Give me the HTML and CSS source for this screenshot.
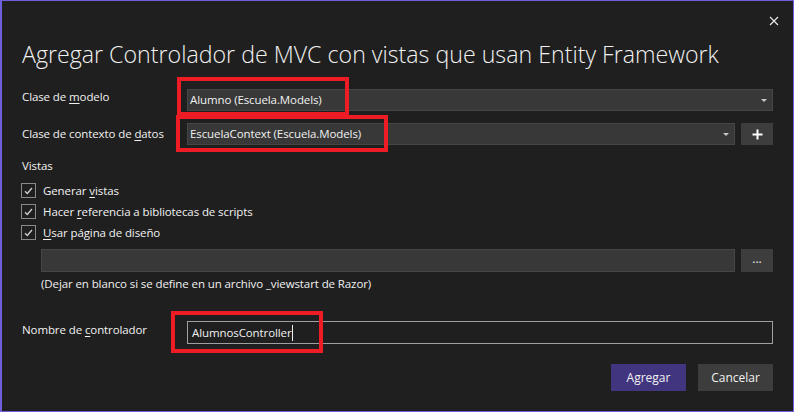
FILE: index.html
```html
<!DOCTYPE html>
<html lang="es">
<head>
<meta charset="utf-8">
<title>Agregar Controlador de MVC</title>
<link rel="stylesheet" href="styles.css">
</head>
<body>
<div class="window">
  <div class="titlebar">
    <span class="close" aria-label="Cerrar">
      <svg width="10" height="10" viewBox="0 0 10 10"><path d="M1 1 L9 9 M9 1 L1 9" stroke="#e6e6e6" stroke-width="1.2" fill="none"/></svg>
    </span>
  </div>
  <h1 class="title">Agregar Controlador de MVC con vistas que usan Entity Framework</h1>

  <div class="row row-model">
    <label class="label">Clase de <u>m</u>odelo</label>
    <div class="control">
      <div class="combo">
        <span class="combo-text">Alumno (Escuela.Models)</span>
        <span class="arrow"></span>
      </div>
      <span class="redbox rb1"></span>
    </div>
  </div>

  <div class="row row-context">
    <label class="label">Clase de contexto de <u>d</u>atos</label>
    <div class="control">
      <div class="combo">
        <span class="combo-text">EscuelaContext (Escuela.Models)</span>
        <span class="arrow"></span>
      </div>
      <button class="sq-btn plus">
        <svg width="11" height="11" viewBox="0 0 11 11"><path d="M5.5 0.5 V10.5 M0.5 5.5 H10.5" stroke="#ffffff" stroke-width="2" fill="none"/></svg>
      </button>
      <span class="redbox rb2"></span>
    </div>
  </div>

  <div class="section">Vistas</div>
  <div class="checks">
    <div class="check"><span class="box"><svg width="9" height="8" viewBox="0 0 9 8"><path d="M1 4.2 L3.3 6.5 L8 1" stroke="#d0d0d0" stroke-width="1.3" fill="none"/></svg></span><span>Generar <u>v</u>istas</span></div>
    <div class="check"><span class="box"><svg width="9" height="8" viewBox="0 0 9 8"><path d="M1 4.2 L3.3 6.5 L8 1" stroke="#d0d0d0" stroke-width="1.3" fill="none"/></svg></span><span>Hacer <u>r</u>eferencia a bibliotecas de scripts</span></div>
    <div class="check"><span class="box"><svg width="9" height="8" viewBox="0 0 9 8"><path d="M1 4.2 L3.3 6.5 L8 1" stroke="#d0d0d0" stroke-width="1.3" fill="none"/></svg></span><span><u>U</u>sar página de diseño</span></div>
  </div>

  <div class="layout-row">
    <div class="layout-input"></div>
    <button class="sq-btn dots">...</button>
  </div>
  <div class="hint">(Dejar en blanco si se define en un archivo _viewstart de Razor)</div>

  <div class="row row-name">
    <label class="label">Nombre de <u>c</u>ontrolador</label>
    <div class="control">
      <div class="textbox"><span class="caret">AlumnosController</span></div>
      <span class="redbox rb3"></span>
    </div>
  </div>

  <div class="footer">
    <button class="btn primary">Agregar</button>
    <button class="btn">Cancelar</button>
  </div>
</div>
</body>
</html>
```
FILE: styles.css
```css
* { box-sizing: border-box; }
html, body { margin: 0; padding: 0; background: #1f1f1f; }
body { font-family: "Open Sans", "Noto Sans", sans-serif; font-size: 11.5px; letter-spacing: -0.1px; color: #f1f1f1; }
u { text-decoration: underline; text-underline-offset: 2px; }

.window {
  width: 794px; height: 412px;
  background: #1f1f1f;
  border: 1px solid #6f5fdc;
  border-left-width: 2px;
  padding: 0 20px 0 20px;
  position: relative;
}
.titlebar { height: 30px; display: flex; justify-content: flex-end; align-items: flex-end; margin-right: -6px; }
.close { width: 10px; height: 10px; display: block; line-height: 0; margin-bottom: 5px; }

.title {
  margin: 5px 0 0 0;
  font-weight: 300;
  font-size: 23.2px;
  letter-spacing: 0;
  line-height: 36px;
  color: #f1f1f1;
  white-space: nowrap;
}

.row { display: flex; align-items: flex-start; }
.label { width: 165px; flex: none; line-height: 18px; }
.control { flex: 1; display: flex; gap: 6px; position: relative; }
.row-model { margin-top: 17px; }
.row-model .label { margin-top: -1px; }
.row-context { margin-top: 12px; }
.row-context .label { padding-top: 2px; }

.combo {
  flex: 1; height: 22px;
  background: #383838;
  border: 1px solid #464646;
  display: flex; align-items: center; justify-content: space-between;
  padding: 0 4px 0 2px;
}
.combo-text { line-height: 18px; }
.arrow { width: 0; height: 0; border-left: 3px solid transparent; border-right: 3px solid transparent; border-top: 3px solid #c8c8c8; margin-right: 1px; }

.sq-btn {
  width: 32px; height: 22px; flex: none;
  background: #3d3d3d; border: none; color: #f1f1f1;
  display: flex; align-items: center; justify-content: center;
  padding: 0; font-family: inherit; font-size: 12px;
}
.dots { height: 23px; line-height: 14px; padding-bottom: 4px; }

.redbox { position: absolute; border: 4px solid #ee1c25; pointer-events: none; }
.rb1 { left: -10px; top: -12px; width: 172px; height: 39px; }
.rb2 { left: -11px; top: -8px; width: 212px; height: 37px; }
.rb3 { left: -16px; top: -10px; width: 152px; height: 42px; }

.section { margin-top: 12px; line-height: 18px; }
.checks { margin-top: 8px; display: flex; flex-direction: column; gap: 6px; }
.check { display: flex; align-items: center; gap: 7px; height: 15px; margin-left: -1px; }
.box {
  width: 15px; height: 15px; flex: none;
  border: 1px solid #8a8a8a; background: #1f1f1f;
  display: flex; align-items: center; justify-content: center;
}

.layout-row { margin-top: 9px; margin-left: 19px; display: flex; gap: 6px; }
.layout-input { flex: 1; height: 23px; background: #383838; border: 1px solid #464646; }
.hint { margin-left: 19px; margin-top: 3px; line-height: 18px; }

.row-name { margin-top: 28px; }
.row-name .label { padding-top: 0px; }
.textbox {
  flex: 1; height: 23px; border: 1px solid #a0a0a0; background: #1f1f1f;
  display: flex; align-items: center; padding-left: 4px;
}
.caret { border-right: 1px solid #f1f1f1; line-height: 16px; padding-right: 0; }

.footer { display: flex; justify-content: flex-end; gap: 12px; margin-top: 20px; }
.btn {
  width: 75px; height: 27px; border: none;
  background: #3d3d3d; color: #f1f1f1;
  font-family: inherit; font-size: 12px; padding: 0;
}
.btn.primary { background: #41357f; }
```
